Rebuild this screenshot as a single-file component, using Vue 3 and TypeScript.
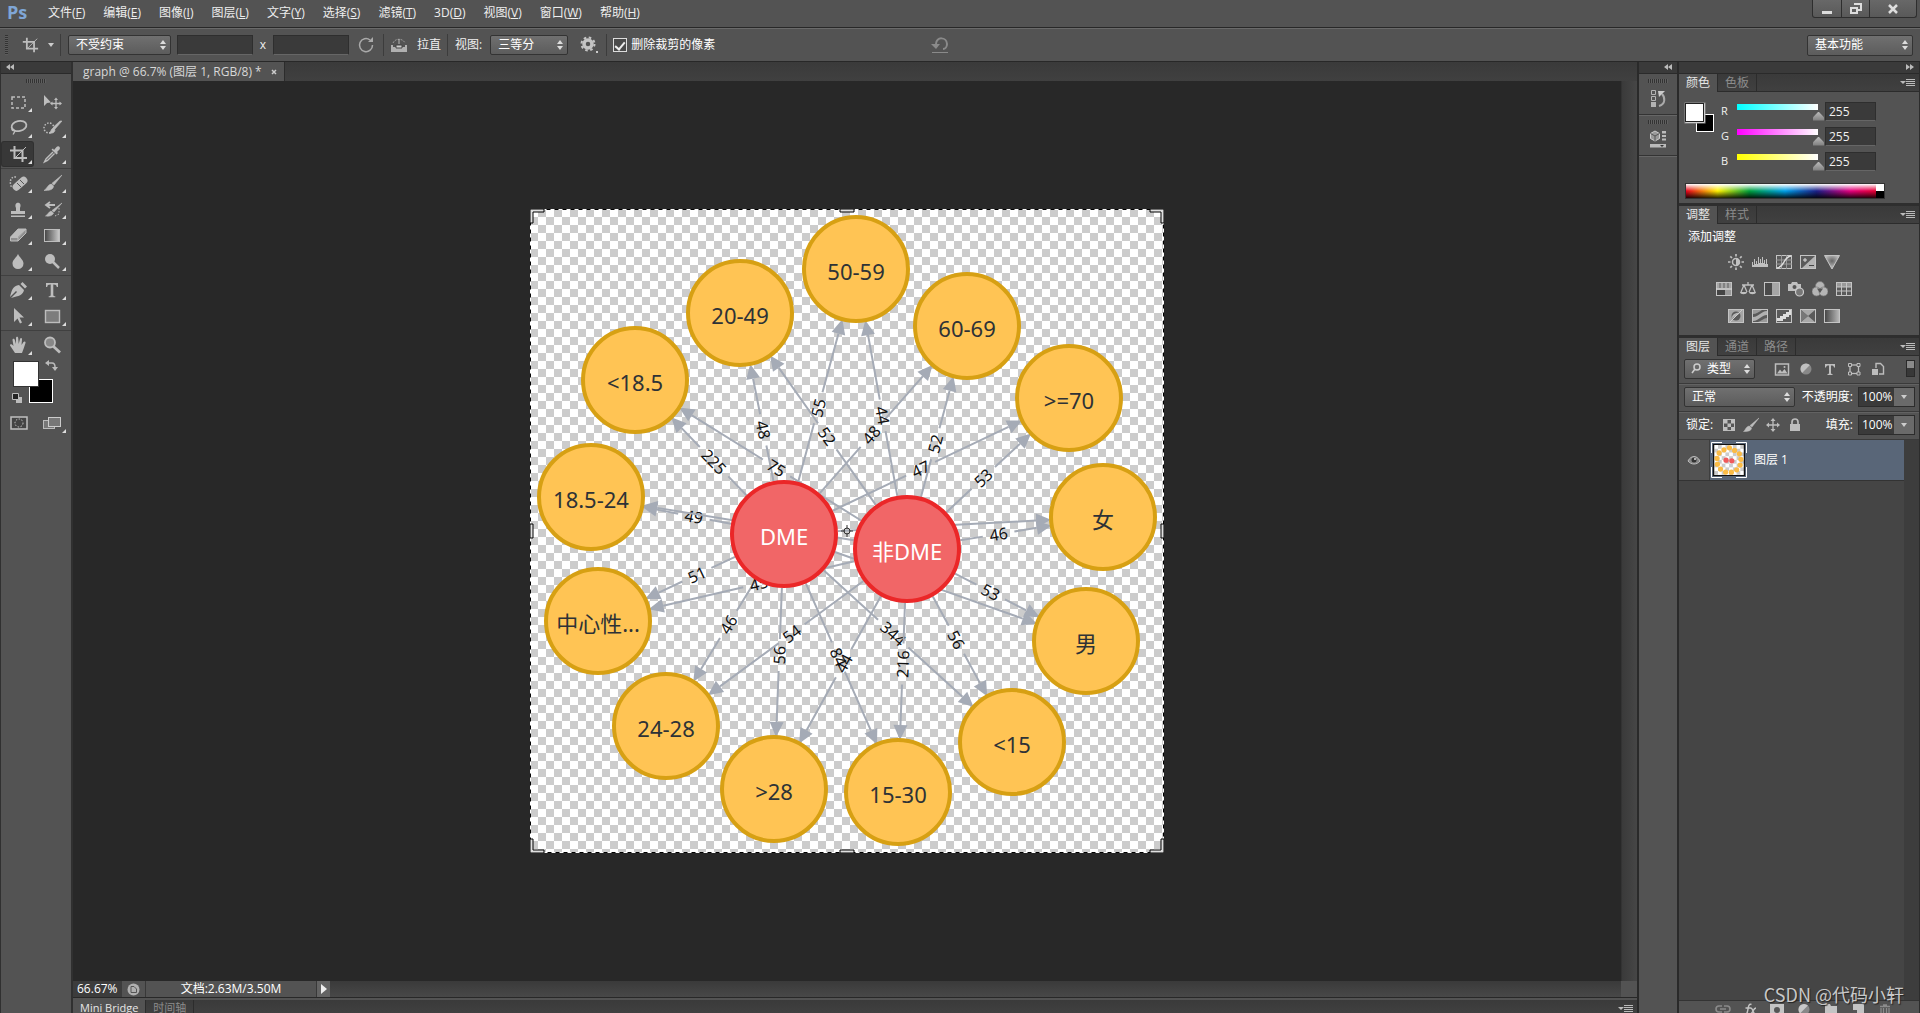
<script setup lang="ts">
interface GraphNode { id: string; x: number; y: number; core?: boolean }
interface Edge { from: string; to: string; label: string }

const menus = [
  ['文件', 'F'], ['编辑', 'E'], ['图像', 'I'], ['图层', 'L'], ['文字', 'Y'], ['选择', 'S'],
  ['滤镜', 'T'], ['3D', 'D'], ['视图', 'V'], ['窗口', 'W'], ['帮助', 'H'],
]

const nodes: GraphNode[] = [
  { id: '<18.5', x: 105, y: 171 },
  { id: '20-49', x: 210, y: 104 },
  { id: '50-59', x: 326, y: 60 },
  { id: '60-69', x: 437, y: 117 },
  { id: '>=70', x: 539, y: 189 },
  { id: '女', x: 573, y: 308 },
  { id: '男', x: 556, y: 432 },
  { id: '<15', x: 482, y: 533 },
  { id: '15-30', x: 368, y: 583 },
  { id: '>28', x: 244, y: 580 },
  { id: '24-28', x: 136, y: 517 },
  { id: '中心性...', x: 68, y: 412 },
  { id: '18.5-24', x: 61, y: 288 },
  { id: 'DME', x: 254, y: 325, core: true },
  { id: '非DME', x: 377, y: 340, core: true },
]

const edges: Edge[] = [
  { from: 'DME', to: '<18.5', label: '225' },
  { from: 'DME', to: '20-49', label: '48' },
  { from: 'DME', to: '50-59', label: '55' },
  { from: 'DME', to: '60-69', label: '48' },
  { from: 'DME', to: '>=70', label: '47' },
  { from: 'DME', to: '女', label: '' },
  { from: 'DME', to: '男', label: '' },
  { from: 'DME', to: '<15', label: '344' },
  { from: 'DME', to: '15-30', label: '84' },
  { from: 'DME', to: '>28', label: '56' },
  { from: 'DME', to: '24-28', label: '46' },
  { from: 'DME', to: '中心性...', label: '51' },
  { from: 'DME', to: '18.5-24', label: '49' },
  { from: '非DME', to: '<18.5', label: '75' },
  { from: '非DME', to: '20-49', label: '52' },
  { from: '非DME', to: '50-59', label: '44' },
  { from: '非DME', to: '60-69', label: '52' },
  { from: '非DME', to: '>=70', label: '53' },
  { from: '非DME', to: '女', label: '46' },
  { from: '非DME', to: '男', label: '53' },
  { from: '非DME', to: '<15', label: '56' },
  { from: '非DME', to: '15-30', label: '216' },
  { from: '非DME', to: '>28', label: '44' },
  { from: '非DME', to: '24-28', label: '54' },
  { from: '非DME', to: '中心性...', label: '45' },
  { from: '非DME', to: '18.5-24', label: '' },
]

const RIM = 54
const HEAD = 13

const drawn = edges.map((e) => {
  const a = nodes.find((n) => n.id === e.from)!
  const b = nodes.find((n) => n.id === e.to)!
  const dx = b.x - a.x
  const dy = b.y - a.y
  const len = Math.hypot(dx, dy)
  const angle = (Math.atan2(dy, dx) * 180) / Math.PI
  const end = len - RIM - HEAD
  const mid = (RIM + end) / 2
  const gap = e.label ? (e.label.length * 9 + 14) / 2 : 0
  return {
    ...e,
    place: `translate(${a.x} ${a.y}) rotate(${angle})`,
    shaft: `M${RIM} 0H${mid - gap}M${mid + gap} 0H${end}`,
    head: `M${end} -7L${len - RIM + 2} 0L${end} 7Z`,
    text: `translate(${mid} 0) rotate(${Math.abs(angle) > 90 ? 180 : 0})`,
  }
})

const S = 'fill="none" stroke="currentColor"'
const tools: Record<string, string> = {
  marquee: `<rect x="4" y="5" width="13" height="11" ${S} stroke-width="1.5" stroke-dasharray="3 2"/>`,
  move: `<path d="M2 3v11l3-3 4-.5z" fill="currentColor"/><path d="M14 7v9M9.500 11.500h9" ${S} stroke-width="1.300"/><path d="M14 5.500l2 2.500h-4zM14 17.500l2-2.500h-4zM8 11.500l2.500-2v4zM20 11.500l-2.500-2v4z" fill="currentColor"/>`,
  lasso: `<ellipse cx="11" cy="8" rx="7.500" ry="5" transform="rotate(-12 11 8)" ${S} stroke-width="1.800"/><path d="M5 10c-2 1-1 3 1 2.500s0 2.500-1 4" ${S} stroke-width="1.300"/>`,
  quick: `<circle cx="7" cy="10" r="5" ${S} stroke-width="1.500" stroke-dasharray="1.500 1.500"/><path d="M20 3l-7 8-2-1.500L18 3zM11 10l2 1.700c0 3-3 4-6 3.300 2-1 2-4 4-5z" fill="currentColor" stroke="currentColor" stroke-width=".6"/>`,
  crop: `<path d="M6.500 2v12H19M2 6.500h12.500V18" ${S} stroke-width="2"/><path d="M7 14L18 3" ${S}/>`,
  eyedrop: `<path d="M12 6l2.500-3c2-2 4.500.500 3 2.500L15 8l1 1-1.500 1.500-5-5L11 4.500z" fill="currentColor"/><path d="M11 8l-7 7-1.500 3 3-1.500 7-7" ${S} stroke-width="1.400"/>`,
  heal: `<path d="M8 4c-6-1-7 6-4 11" ${S} stroke-width="1.500" stroke-dasharray="1.500 1.500"/><rect x="3.500" y="7" width="17" height="7.500" rx="3.500" transform="rotate(-42 12 10.700)" fill="currentColor"/><path d="M9 10l4 4M12 7l4 4" stroke="#555" fill="none"/>`,
  brush: `<path d="M20 2l-8 10-2-1.700zM9.500 11l2 2c0 4-5 4.500-9.500 4.500 3-1.500 3.500-6 7.500-6.500z" fill="currentColor" stroke="currentColor" stroke-width=".6"/>`,
  stamp: `<path d="M8 9c-3-7 7-7 4 0v3h5v3H3v-3h5zM3 16.500h14V18H3z" fill="currentColor"/>`,
  history: `<path d="M20 4l-8 9-2-1.500zM9 12l2.500 2c-1 3-5 3.500-8 3 2-1 3-4 5.500-5z" fill="currentColor" stroke="currentColor" stroke-width=".6"/><path d="M4 6h9M8 3L4 6l4 3" ${S} stroke-width="1.800"/><path d="M17 9v6l-4 2" ${S} stroke-dasharray="1.500 1.500"/>`,
  eraser: `<path d="M10 4h8l-8 8H2z" fill="currentColor"/><path d="M2 12h8v4H2zM10 12l8-8v4l-8 8z" fill="#8f8f8f"/><path d="M2.500 12.500h7.500v3.500H2.500zM10 12.500L18 4v4l-8 8M10 4L2.500 12.500M10 4h8" ${S}/>`,
  gradient: `<defs><linearGradient id="tg"><stop stop-color="#444"/><stop offset="1" stop-color="#ccc"/></linearGradient></defs><rect x="2.500" y="4.500" width="15" height="12" fill="url(#tg)" stroke="currentColor"/>`,
  blur: `<path d="M10 3c2 4 5.500 6 5.500 9.500a5.500 5.500 0 0 1-11 0C4.500 9 8 7 10 3z" fill="currentColor"/>`,
  dodge: `<circle cx="8" cy="8" r="5" fill="currentColor"/><path d="M11 11l6 6" ${S} stroke-width="2.500"/>`,
  pen: `<path d="M12.500 4l2-2 4.500 4.500-2 2zM11 5l5 5c-1 5-5 6-13 8l6-6-1-1-6 6C4 9 5 6 11 5z" fill="currentColor"/>`,
  type: `<path d="M4 3h12v4h-1.200c-.4-2-1-2.600-3.500-2.600V15c0 1 .7 1.300 2 1.300v1H6.700v-1c1.300 0 2-.3 2-1.300V4.400C6 4.400 5.500 5 5.200 7H4z" fill="currentColor"/>`,
  arrow: `<path d="M6 2v14l3.500-3.500 2.500 5 2-1-2.500-5H16z" fill="currentColor"/>`,
  shape: `<rect x="3.500" y="4.500" width="14" height="12" fill="#7d7d7d" stroke="currentColor" stroke-width="1.400"/>`,
  hand: `<path d="M7 18L2 10.500c0-2 2-1.500 3.500.500L4.500 5c0-1.800 2-1.800 2.300 0L8 9V3c.2-1.600 2-1.600 2.200 0l.5 6 1.300-5c.5-1.500 2.200-1 2 .5L13.500 10l2-3c1-1.200 2.400-.4 2 1-1 3-2 6-3.500 10z" fill="currentColor"/>`,
  zoom: `<circle cx="8" cy="7.500" r="5" fill="#888" stroke="currentColor" stroke-width="1.800"/><path d="M11.500 11.500L18 17.500" ${S} stroke-width="2.800"/>`,
}
const toolGroups = [
  ['marquee', 'move', 'lasso', 'quick', 'crop', 'eyedrop'],
  ['heal', 'brush', 'stamp', 'history', 'eraser', 'gradient', 'blur', 'dodge'],
  ['pen', 'type', 'arrow', 'shape'],
  ['hand', 'zoom'],
]
const noFlyout = ['move', 'zoom']

const box = '<rect x="0.500" y="1.500" width="15" height="13" fill="#a6a6a6" stroke="#c4c4c4"/>'
const dark = '<rect x="0.500" y="1.500" width="15" height="13" fill="#5a5a5a" stroke="#c4c4c4"/>'
const adjustRows: string[][] = [
  [
    `<circle cx="8" cy="8" r="3.500" ${S} stroke-width="1.500"/><path d="M8 4.500a3.500 3.500 0 0 1 0 7z" fill="currentColor"/><path d="M8 0v2.500M8 13.500V16M0 8h2.500M13.500 8H16M2.300 2.300L4 4M12 12l1.700 1.700M2.300 13.700L4 12M12 4l1.700-1.700" ${S} stroke-width="1.700"/>`,
    `<path d="M0 13V8h1v3h1V5h1v5h1V7h1v3h1V3h1v6h1V5h1v4h1V3h1v6h1V6h1v4h1V5h1v5h1v3z" fill="currentColor"/>`,
    `${dark}<path d="M0 6h16M0 10h16M5.500 1v14M10.500 1v14" stroke="#999" fill="none"/><path d="M1 14C9 13 7 3 15 2" stroke="#ddd" stroke-width="1.500" fill="none"/>`,
    `${dark}<path d="M15 2v12H2z" fill="#b4b4b4"/><path d="M3 6h4M5 4v4" stroke="#ddd" fill="none"/><path d="M9 11.500h5" stroke="#444" fill="none"/>`,
    `<defs><radialGradient id="vg" cx=".5" cy=".4" r=".5"><stop stop-color="#666"/><stop offset="1" stop-color="#bbb"/></radialGradient></defs><path d="M.5 1.500h15L8 15z" fill="url(#vg)" stroke="#c4c4c4"/>`,
  ],
  [
    `${box}<path d="M1 9h14v5H1z" fill="#444"/><path d="M4 2v5M8 2v5M12 2v5" stroke="#777" stroke-width="1.500"/><path d="M0 8h16" stroke="#ddd"/><path d="M9 9h6v5H9z" fill="#999"/>`,
    `<path d="M8 1v3M2 4h12M4 4L1 11M4 4l3 7M12 4L9 11M12 4l3 7" ${S} stroke-width="1.300"/><path d="M0 11h7c0 3-7 3-7 0zM9 11h7c0 3-7 3-7 0z" fill="currentColor"/>`,
    `${box}<path d="M1 2h7v12H1z" fill="#4a4a4a"/>`,
    `<path d="M0 3h3l1-2h5l1 2h3v7H0z" fill="currentColor"/><circle cx="6.500" cy="6" r="2" fill="#555"/><circle cx="11.500" cy="11" r="4" fill="#777" stroke="#ccc" stroke-width="1.200"/>`,
    `<g fill="#b5b5b5" stroke="#777" stroke-width=".7"><circle cx="8" cy="5" r="4.500"/><circle cx="4.500" cy="10.500" r="4.500"/><circle cx="11.500" cy="10.500" r="4.500"/></g><path d="M5 7.500h6L8 12z" fill="#555"/>`,
    `${dark}<path d="M1 2h14v4H1z" fill="#999"/><path d="M0 6h16M0 10h16M5.500 2v13M10.500 2v13" stroke="#c4c4c4" fill="none"/>`,
  ],
  [
    `${box}<circle cx="8" cy="8" r="4.500" fill="#5a5a5a"/><path d="M4.500 12C5 8 9 9 12 4.500 9 5 5 5 4 9z" fill="#b4b4b4"/><path d="M2 14L14 2" stroke="#ccc" fill="none"/>`,
    `${dark}<path d="M1 9c6 0 8-6 14-6v4c-6 0-8 6-14 6z" fill="#b0b0b0"/><path d="M6 14c3-1 6-4 9-4v4zM1 2h9C7 4 4 6 1 6z" fill="#999"/>`,
    `${dark}<path d="M1 10h3V8h3V6h3V4h3V2h2v5h-2v2h-3v2H7v2H1z" fill="#ddd"/>`,
    `${dark}<path d="M1 2l7 6 7-6zM1 14l7-6 7 6z" fill="#a8a8a8"/><path d="M1 2l7 6-7 6" fill="#777"/>`,
    `<defs><linearGradient id="ag"><stop stop-color="#444"/><stop offset="1" stop-color="#bbb"/></linearGradient></defs><rect x="0.500" y="1.500" width="15" height="13" fill="url(#ag)" stroke="#c4c4c4"/>`,
  ],
]

const filterIcons = [
  `<rect x="1.500" y="3" width="13" height="11" ${S} stroke-width="1.500"/><path d="M3 12.500l3-4 2 2.500 2.500-3 3 4.500z" fill="currentColor"/><circle cx="10.500" cy="6" r="1" fill="currentColor"/>`,
  `<circle cx="8" cy="8" r="5.500" fill="#888"/><path d="M4.100 11.900A5.500 5.500 0 0 1 11.900 4.100z" fill="#c0c0c0"/>`,
  `<path d="M3 3h10v3.500h-1c-.3-1.600-.8-2-3-2V12c0 .8.500 1 1.500 1v1h-5v-1C6.500 13 7 12.800 7 12V4.500c-2.200 0-2.700.4-3 2H3z" fill="currentColor"/>`,
  `<rect x="4" y="4" width="8.500" height="8.500" ${S} stroke-width="1.300"/><path d="M2.500 2.500h3v3h-3zM11 2.500h3v3h-3zM2.500 11h3v3h-3zM11 11h3v3h-3z" fill="#555" stroke="currentColor"/>`,
  `<path d="M6 7V2.500h4.500l3 3V13H9" ${S} stroke-width="1.400"/><path d="M2 8h6v6H2z" fill="currentColor"/>`,
]
const lockIcons = [
  `<rect x="2.500" y="2.500" width="11" height="11" fill="#555" stroke="currentColor"/><path d="M3 3h3.500v3.500H3zM10 3h3.500v3.500H10zM6.500 6.500H10V10H6.500zM3 10h3.500v3.500H3zM10 10h3.500v3.500H10z" fill="currentColor"/>`,
  `<path d="M16 1L9 10 7 8.500zM6.500 9l2 2c0 3-4 3.500-8 3.500 2-1 2-5 6-5.500z" fill="currentColor" stroke="currentColor" stroke-width=".5"/>`,
  `<path d="M8 3v10M3 8h10" ${S} stroke-width="1.300"/><path d="M8 1l2.500 3h-5zM8 15l2.500-3h-5zM1 8l3-2.500v5zM15 8l-3-2.500v5z" fill="currentColor"/>`,
  `<path d="M3 7h10v7H3z" fill="currentColor"/><path d="M5 7.500V5c0-4 6-4 6 0v2.500" ${S} stroke-width="1.700"/>`,
]
const footIcons = [
  `<path d="M7 5H4a3 3 0 0 0 0 6h3M9 5h3a3 3 0 0 1 0 6H9M5 8h6" fill="none" stroke="#8b8b8b" stroke-width="1.600"/>`,
  `<path d="M9.500 3.500C7 2.500 6.500 5 6 8s-1 6-3.500 5.500M3.500 7h5M8.500 7c3 0 2 6 5 6M14 7c-3 0-3 6-6 6" ${S} stroke-width="1.500"/>`,
  `<path d="M1 3h14v11H1z" fill="currentColor"/><circle cx="8" cy="9" r="3" fill="#555"/>`,
  `<circle cx="8" cy="8.500" r="5.500" fill="#888"/><path d="M4.100 12.400A5.500 5.500 0 0 1 11.900 4.600z" fill="#c8c8c8"/>`,
  `<path d="M2 3h5l1 2h6v9H2z" fill="currentColor"/>`,
  `<path d="M3 3h11v11H7l-4-5z" fill="currentColor"/><path d="M3 9h4v5H3z" fill="#555"/>`,
  `<path d="M3 5.500h10M6 4h4M4 7v7h8V7M6.500 7v6M9.500 7v6" fill="none" stroke="#8b8b8b" stroke-width="1.300"/>`,
]

const channels = [
  { name: 'R', color: '#00ffff' },
  { name: 'G', color: '#ff00ff' },
  { name: 'B', color: '#ffff00' },
]
const corners = ['M0 0H14V3H3V14H0Z', 'M634 0H620V3H631V14H634Z', 'M0 644H14V641H3V630H0Z', 'M634 644H620V641H631V630H634Z',
  'M310 0H324V3H310Z', 'M310 641H324V644H310Z', 'M0 315H3V329H0Z', 'M631 315H634V329H631Z']
</script>

<template>
  <div class="app">
    <header class="menubar">
      <strong class="logo">Ps</strong>
      <nav class="menus">
        <a v-for="m in menus" :key="m[0]" href="#">{{ m[0] }}(<u>{{ m[1] }}</u>)</a>
      </nav>
      <div class="winbtns">
        <button aria-label="最小化"><svg width="12" height="12"><path d="M1 8h10v3H1z" fill="#ddd" /></svg></button>
        <button aria-label="还原"><svg width="14" height="12"><path d="M5 1h7v6H9M2 5h6v5H2z" fill="none" stroke="#ddd" stroke-width="2" /></svg></button>
        <button class="close" aria-label="关闭"><svg width="12" height="10"><path d="M2 1l8 8M10 1L2 9" stroke="#ddd" stroke-width="2.500" /></svg></button>
      </div>
    </header>

    <div class="options">
      <i class="vgrip"></i>
      <button class="plain cropbtn" aria-label="裁剪工具"><svg width="18" height="18" viewBox="0 0 20 20" v-html="tools.crop"></svg><i class="caret"></i></button>
      <i class="sep"></i>
      <span class="select ratio"><select aria-label="比例"><option>不受约束</option></select><i class="updown"></i></span>
      <input class="field size" type="text" aria-label="宽度">
      <span class="times">x</span>
      <input class="field size" type="text" aria-label="高度">
      <button class="plain rotate" aria-label="旋转"><svg width="18" height="18"><path d="M13 4A6.500 6.500 0 1 0 15.500 9" fill="none" stroke="#aaa" stroke-width="1.500" /><path d="M16 1v5h-5z" fill="#aaa" /></svg></button>
      <i class="sep"></i>
      <button class="plain level" aria-label="拉直"><svg width="18" height="16"><path d="M1 8h2v2h12V8h2v7H1z" fill="#b0b0b0" /><path d="M6 8h6v3H6z" fill="#ccc" stroke="#444" /><path d="M3 6c2-5 10-5 12 0" fill="none" stroke="#999" stroke-dasharray="2 1" /><path d="M9 2v5" stroke="#bbb" /></svg>拉直</button>
      <i class="sep"></i>
      <label class="view" for="overlay">视图:</label>
      <span class="select thirds"><select id="overlay"><option>三等分</option></select><i class="updown"></i></span>
      <button class="plain gear" aria-label="设置"><svg width="18" height="18"><circle cx="8" cy="8" r="4" fill="none" stroke="#c4c4c4" stroke-width="3.500" /><circle cx="8" cy="8" r="6.500" fill="none" stroke="#c4c4c4" stroke-width="2" stroke-dasharray="2.550 2.550" /><path d="M16 15h2v2h-2z" fill="#ccc" /></svg></button>
      <i class="sep"></i>
      <label class="check"><input type="checkbox" checked>删除裁剪的像素</label>
      <button class="plain undo" aria-label="复位"><svg width="18" height="18"><path d="M5 8c0-8 11-7 11 0 0 3-2 5-4 5" fill="none" stroke="#8a8a8a" stroke-width="2" /><path d="M0 8h9l-4 5z" fill="#8a8a8a" /><path d="M1 16.500h16" stroke="#8a8a8a" /></svg></button>
      <span class="select work"><select aria-label="工作区"><option>基本功能</option></select><i class="updown"></i></span>
    </div>

    <div class="main">
      <aside class="tools">
        <div class="strip"><svg width="8" height="6"><path d="M4 0v6L0 3zM8 0v6L4 3z" fill="#bbb" /></svg></div>
        <i class="hgrip"></i>
        <div v-for="(g, i) in toolGroups" :key="i" class="group">
          <button v-for="t in g" :key="t" class="tool" :class="{ on: t === 'crop', fly: !noFlyout.includes(t) }" :aria-label="t">
            <svg width="20" height="20" viewBox="0 0 20 20" v-html="tools[t]"></svg>
          </button>
        </div>
        <svg class="swatches" width="50" height="48">
          <rect x="19.500" y="20.500" width="23" height="23" fill="#000" stroke="#fff" />
          <rect x="3.500" y="2.500" width="25" height="25" fill="#fff" stroke="#333" />
          <path d="M38 4h4c2 0 3 1 3 4v1" fill="none" stroke="#bbb" stroke-width="1.500" />
          <path d="M35 4l4-3v6zM42 8h6l-3 4z" fill="#bbb" />
          <path d="M6 38h6v6H6z" fill="#bbb" /><path d="M2.500 34.500h6v6h-6z" fill="#222" stroke="#bbb" />
        </svg>
        <div class="modes">
          <button class="tool" aria-label="快速蒙版"><svg width="20" height="20"><rect x="2" y="4" width="16" height="12" fill="#444" stroke="#c0c0c0" stroke-width="1.500" /><circle cx="10" cy="10" r="4" fill="none" stroke="#ccc" stroke-dasharray="1.500 1.500" /></svg></button>
          <button class="tool fly" aria-label="屏幕模式"><svg width="20" height="20"><rect x="1.500" y="7.500" width="11" height="8" fill="#777" stroke="#bbb" /><rect x="6.500" y="4.500" width="12" height="9" fill="#777" stroke="#ccc" /></svg></button>
        </div>
      </aside>

      <section class="doc">
        <div class="tabs">
          <div class="tab doctab"><span>graph @ 66.7% (图层 1, RGB/8) *</span><button class="plain" aria-label="关闭文档"><svg width="6" height="6"><path d="M1 1l4 4M5 1L1 5" stroke="#ccc" stroke-width="1.500" /></svg></button></div>
        </div>
        <div class="work-area">
          <div class="canvas">
            <svg class="graph" width="634" height="644" viewBox="0 0 634 644">
              <defs><pattern id="checker" width="16" height="16" patternUnits="userSpaceOnUse"><rect width="16" height="16" fill="#fff" /><path d="M8 0h8v8H8zM0 8h8v8H0z" fill="#ccc" /></pattern></defs>
              <rect width="634" height="644" fill="url(#checker)" />
              <g v-for="(e, i) in drawn" :key="i" :transform="e.place">
                <path :d="e.shaft" class="shaft" />
                <path :d="e.head" class="head" />
                <text class="elabel" :transform="e.text" y="6">{{ e.label }}</text>
              </g>
              <g v-for="n in nodes" :key="n.id" :class="{ core: n.core }" class="node" :transform="`translate(${n.x} ${n.y})`">
                <circle r="52" />
                <text y="11">{{ n.id }}</text>
              </g>
              <rect x="0.500" y="0.500" width="633" height="643" class="edge-w" />
              <rect x="0.500" y="0.500" width="633" height="643" class="edge-b" />
              <path v-for="c in corners" :key="c" :d="c" class="handle" />
              <circle cx="317" cy="322" r="3" fill="none" stroke="#333" />
              <path d="M317 316v4M317 324v4M311 322h4M319 322h4" stroke="#333" />
            </svg>
          </div>
          <div class="vscroll"></div>
        </div>
        <div class="status">
          <input class="zoomval" type="text" value="66.67%" aria-label="缩放">
          <span class="badge"><svg width="13" height="13"><circle cx="6.500" cy="6.500" r="6" fill="#b0b0b0" /><path d="M4 3.500h3l2.500 2.500v3.500H4z" fill="none" stroke="#555" /></svg></span>
          <span class="info">文档:2.63M/3.50M</span>
          <button class="more" aria-label="更多"><svg width="6" height="10"><path d="M0 0l6 5-6 5z" fill="#eee" /></svg></button>
          <div class="hscroll"></div>
          <div class="corner"></div>
        </div>
        <div class="tabs bottom">
          <button class="tab active">Mini Bridge</button><button class="tab">时间轴</button><i class="pmenu"></i>
        </div>
      </section>

      <aside class="dock">
        <div class="strip right"><svg width="8" height="6"><path d="M4 0v6L0 3zM8 0v6L4 3z" fill="#bbb" /></svg></div>
        <div class="dockcell"><i class="hgrip"></i><button class="plain" aria-label="历史记录"><svg width="16" height="18"><path d="M1.500 1.500h4v4h-4zM1.500 7.500h4v4h-4z" fill="none" stroke="#b4b4b4" /><path d="M1 13h5v5H1z" fill="#b4b4b4" /><path d="M9 17c7-2 6-9 3-12" fill="none" stroke="#aaa" stroke-width="2" /><path d="M8 2h7l-6 6z" fill="#ccc" /></svg></button></div>
        <div class="dockcell"><i class="hgrip"></i><button class="plain" aria-label="属性"><svg width="16" height="18"><path d="M5 1l4.500 2.500v5L5 11 .5 8.500v-5z" fill="#999" stroke="#ccc" /><path d="M.5 3.500L5 6l4.500-2.500M5 6v5" fill="none" stroke="#555" /><path d="M12 1h4v2.500h-4zM12 5h4v2h-4zM12 8.500h4v2h-4zM0 14h16v3.500H0z" fill="#bbb" /><path d="M10 15h4l-2 2z" fill="#333" /></svg></button></div>
      </aside>

      <aside class="panels">
        <div class="strip right"><svg width="8" height="6"><path d="M0 0v6l4-3zM4 0v6l4-3z" fill="#bbb" /></svg></div>

        <section class="panel">
          <div class="tabs"><button class="tab active">颜色</button><button class="tab">色板</button><i class="pmenu"></i></div>
          <div class="color">
            <svg class="fgbg" width="32" height="32"><rect x="12.500" y="12.500" width="17" height="17" fill="#000" stroke="#fff" /><rect x="1" y="1" width="20" height="20" fill="#fff" stroke="#999" /><rect x="1.500" y="1.500" width="18" height="18" fill="#fff" stroke="#222" /></svg>
            <div class="sliders">
              <div v-for="c in channels" :key="c.name" class="chan">
                <label :for="'c' + c.name">{{ c.name }}</label>
                <input :id="'c' + c.name" class="range" type="range" min="0" max="255" value="255" :style="{ '--c': c.color }">
                <input class="field num" type="text" value="255" :aria-label="c.name + ' 值'">
              </div>
            </div>
            <div class="spectrum"><i></i></div>
          </div>
        </section>

        <section class="panel">
          <div class="tabs"><button class="tab active">调整</button><button class="tab">样式</button><i class="pmenu"></i></div>
          <div class="adjust">
            <p>添加调整</p>
            <div v-for="(r, i) in adjustRows" :key="i" class="arow">
              <button v-for="(a, j) in r" :key="j" class="plain" :aria-label="'调整 ' + (i + 1) + '-' + (j + 1)"><svg width="16" height="16" viewBox="0 0 16 16" v-html="a"></svg></button>
            </div>
          </div>
        </section>

        <section class="panel layers">
          <div class="tabs"><button class="tab active">图层</button><button class="tab">通道</button><button class="tab">路径</button><i class="pmenu"></i></div>
          <div class="lrow filter">
            <span class="select kind"><svg width="10" height="11"><circle cx="6" cy="4" r="3" fill="none" stroke="#ccc" stroke-width="1.500" /><path d="M4 6L1 10" stroke="#ccc" stroke-width="1.500" /></svg><select aria-label="滤镜类型"><option>类型</option></select><i class="updown"></i></span>
            <div class="ficons"><button v-for="(f, i) in filterIcons" :key="i" class="plain" :aria-label="'过滤 ' + (i + 1)"><svg width="16" height="16" viewBox="0 0 16 16" v-html="f"></svg></button></div>
            <i class="toggle"></i>
          </div>
          <div class="lrow">
            <span class="select blend"><select aria-label="混合模式"><option>正常</option></select><i class="updown"></i></span>
            <label class="push" for="opacity">不透明度:</label>
            <span class="combo"><input id="opacity" type="text" value="100%"><button aria-label="不透明度滑块"><i class="caret"></i></button></span>
          </div>
          <div class="lrow">
            <span class="lock">锁定:</span>
            <div class="licons"><button v-for="(f, i) in lockIcons" :key="i" class="plain" :aria-label="'锁定 ' + (i + 1)"><svg width="16" height="16" viewBox="0 0 16 16" v-html="f"></svg></button></div>
            <label class="push" for="fill">填充:</label>
            <span class="combo"><input id="fill" type="text" value="100%"><button aria-label="填充滑块"><i class="caret"></i></button></span>
          </div>
          <div class="list">
            <div class="items">
              <div class="layer">
                <button class="eye plain" aria-label="可见性"><svg width="14" height="10"><path d="M1 6c3-6 9-6 12 0-3 4-9 4-12 0z" fill="#888" stroke="#bbb" /><circle cx="7" cy="5" r="2.500" fill="#333" /><circle cx="8" cy="4" r="1" fill="#ddd" /></svg></button>
                <div class="name">
                  <svg width="36" height="36" viewBox="0 0 36 36">
                    <path d="M.5 11V.5H11M25 .5h10.500V11M35.500 25v10.500H25M11 35.500H.500V25" fill="none" stroke="#fff" />
                    <rect x="2" y="2" width="32" height="32" fill="#111" />
                    <svg x="3" y="3" width="30" height="30" viewBox="0 0 634 644">
                      <defs><pattern id="mini" width="160" height="160" patternUnits="userSpaceOnUse"><rect width="160" height="160" fill="#fff" /><path d="M80 0h80v80H80zM0 80h80v80H0z" fill="#ccc" /></pattern></defs>
                      <rect width="634" height="644" fill="url(#mini)" />
                      <circle v-for="n in nodes" :key="n.id" :cx="n.x" :cy="n.y" r="56" :fill="n.core ? '#f05a5c' : '#fabb46'" />
                    </svg>
                  </svg>
                  <span>图层 1</span>
                </div>
              </div>
            </div>
            <div class="lscroll"></div>
          </div>
          <div class="foot"><button v-for="(f, i) in footIcons" :key="i" class="plain" :aria-label="'图层操作 ' + (i + 1)"><svg width="16" height="16" viewBox="0 0 16 16" v-html="f"></svg></button></div>
        </section>
      </aside>
    </div>
    <div class="watermark">CSDN @代码小轩</div>
  </div>
</template>

<style>
html, body { margin: 0; background: #535353; }
</style>

<style scoped>
* { box-sizing: border-box; }
.app { position: relative; height: 100vh; display: flex; flex-direction: column; overflow: hidden; background: #535353; color: #f0f0f0; font: 12px/16px "Open Sans", "Noto Sans CJK SC", sans-serif; }
button, input, select { font: inherit; color: inherit; margin: 0; padding: 0; border: 0; border-radius: 0; }
button { background: none; display: flex; align-items: center; justify-content: center; }
svg { display: block; flex: none; }
i { display: block; flex: none; }
.plain { color: #bdbdbd; }

.menubar { flex: none; height: 28px; display: flex; border-bottom: 1px solid #282828; padding-left: 7px; }
.logo { width: 41px; color: #7fa6d6; font: 700 18px/25px "Open Sans", sans-serif; }
.menus { display: flex; gap: 18px; flex: 1; }
.menus a { color: #eee; text-decoration: none; line-height: 25px; white-space: nowrap; }
.winbtns { display: flex; height: 18px; margin-right: 3px; border: 1px solid #2e2e2e; border-top: 0; border-radius: 0 0 3px 3px; background: linear-gradient(#686868, #595959); }
.winbtns button { width: 28px; }
.winbtns button + button { border-left: 1px solid #2e2e2e; }
.winbtns .close { width: 47px; }

.options { flex: none; height: 34px; display: flex; align-items: center; border-top: 1px solid #6a6a6a; border-bottom: 1px solid #282828; padding: 0 7px 0 5px; }
.vgrip { width: 3px; height: 20px; background: repeating-linear-gradient(#333 0 1px, #5c5c5c 1px 2px); }
.cropbtn { gap: 9px; margin: 0 6px 0 13px; }
.caret { border: 3px solid transparent; border-top: 4px solid #ccc; border-bottom: 0; }
.sep { width: 1px; height: 22px; background: #3c3c3c; }
.select { position: relative; display: flex; align-items: center; height: 20px; border: 1px solid #333; border-radius: 2px; background: linear-gradient(#707070, #5c5c5c); color: #fff; }
.select select { appearance: none; background: none; flex: 1; min-width: 0; height: 18px; padding-left: 7px; line-height: 16px; }
.updown { position: absolute; right: 4px; top: 4px; width: 6px; height: 10px; }
.updown::before, .updown::after { content: ""; position: absolute; left: 0; border: 3px solid transparent; }
.updown::before { top: 0; border-bottom: 4px solid #ddd; border-top: 0; }
.updown::after { bottom: 0; border-top: 4px solid #ddd; border-bottom: 0; }
.ratio { width: 103px; margin: 0 6px 0 7px; }
.field { height: 20px; background: #3a3a3a; border: 1px solid #2e2e2e; border-bottom-color: #666; }
.size { width: 76px; }
.times { width: 20px; text-align: center; }
.rotate { margin: 0 8px; }
.level { gap: 9px; margin: 0 6px; color: #f0f0f0; }
.view { margin: 0 8px 0 7px; }
.thirds { width: 78px; margin-right: 12px; }
.gear { margin-right: 8px; }
.check { display: flex; align-items: center; gap: 4px; margin-left: 6px; color: #fff; }
.check input { appearance: none; width: 14px; height: 14px; border: 1px solid #ddd; background: #4a4a4a; display: grid; place-items: center; }
.check input::before { content: ""; width: 4px; height: 8px; border: solid #eee; border-width: 0 2px 2px 0; transform: rotate(40deg); }
.undo { margin-left: 216px; }
.work { width: 106px; height: 21px; margin-left: auto; }

.main { flex: 1; min-height: 0; display: flex; }
.strip { flex: none; height: 12px; background: #3a3a3a; border-bottom: 1px solid #2a2a2a; padding: 2px 5px; display: flex; }
.strip.right { justify-content: flex-end; }
.hgrip { width: 20px; height: 4px; margin: 5px auto 0; background: repeating-linear-gradient(90deg, #333 0 1px, #606060 1px 2px); }

.tools { flex: none; width: 73px; border: solid #303030; border-width: 0 2px 0 1px; display: flex; flex-direction: column; }
.group { display: grid; grid-template-columns: 34px 34px; grid-auto-rows: 26px; padding: 1px 0; }
.group + .group { border-top: 1px solid #404040; }
.hgrip + .group { margin-top: 5px; }
.tool { position: relative; width: 31px; height: 24px; margin: 1px; color: #bdbdbd; }
.tool.on { background: #383838; box-shadow: 0 0 0 1px #303030; border-radius: 2px; }
.tool.fly::after { content: ""; position: absolute; right: 1px; bottom: 2px; width: 4px; height: 4px; background: #ddd; clip-path: polygon(100% 0, 100% 100%, 0 100%); }
.swatches { margin-left: 9px; }
.modes { display: flex; margin: 3px 0 0 1px; }

.doc { flex: 1; min-width: 0; display: flex; flex-direction: column; }
.tabs { flex: none; height: 18px; display: flex; background: linear-gradient(#3a3a3a, #404040); border-bottom: 1px solid #2c2c2c; }
.tab { padding: 0 7px; color: #8c8c8c; border-right: 1px solid #2c2c2c; white-space: nowrap; line-height: 16px; }
.tab.active { background: #535353; color: #e6e6e6; margin-bottom: -1px; padding-bottom: 1px; }
.doc > .tabs { height: 19px; border-bottom: 0; }
.doc .doctab { display: flex; align-items: center; gap: 9px; padding: 1px 7px 0 10px; background: #535353; color: #d8d8d8; }
.work-area { flex: 1; min-height: 0; display: flex; }
.canvas { flex: 1; min-width: 0; background: #282828; display: flex; align-items: center; justify-content: center; overflow: hidden; }
.vscroll { width: 16px; background: linear-gradient(90deg, #3a3a3a, #464646); border-left: 1px solid #333; }
.status { flex: none; height: 17px; display: flex; border-bottom: 1px solid #282828; }
.zoomval { width: 49px; background: #3c3c3c; padding-left: 4px; color: #fff; }
.badge { width: 24px; display: grid; place-items: center; border-right: 1px solid #383838; }
.info { width: 171px; text-align: center; color: #fff; border-right: 1px solid #383838; }
.more { width: 13px; background: #636363; }
.hscroll { flex: 1; background: linear-gradient(#3a3a3a, #484848); }
.corner { width: 16px; }
.doc > .bottom { height: 13px; margin-top: 2px; overflow: hidden; align-items: flex-start; }
.bottom .tab { height: 16px; font-size: 11px; }
.pmenu { width: 15px; height: 8px; margin: 5px 4px 0 auto; background: linear-gradient(#bbb, #bbb) 6px 0 / 9px 1px no-repeat, linear-gradient(#bbb, #bbb) 6px 2px / 9px 1px no-repeat, linear-gradient(#bbb, #bbb) 6px 4px / 9px 1px no-repeat, linear-gradient(#bbb, #bbb) 6px 6px / 9px 1px no-repeat; }
.pmenu::before { content: ""; display: block; width: 0; margin-top: 2px; border: solid transparent; border-width: 3px 3px 0; border-top-color: #bbb; }

.shaft { stroke: #a5abb6; stroke-width: 2; fill: none; }
.head { fill: #a5abb6; }
.graph text { text-anchor: middle; font-family: "Noto Sans", "Noto Sans CJK SC", sans-serif; }
.elabel { font-size: 16px; fill: #111; }
.node circle { fill: #ffc454; stroke: #d7a013; stroke-width: 4; }
.node text { font-size: 22px; fill: #2e3236; }
.core circle { fill: #f16667; stroke: #eb2728; }
.core text { fill: #fff; }
.edge-w { fill: none; stroke: #fff; }
.edge-b { fill: none; stroke: #000; stroke-dasharray: 4 4; }
.handle { fill: #e0e0e0; stroke: #000; }

.dock { flex: none; width: 42px; border: solid #2a2a2a; border-width: 0 2px; }
.dockcell { height: 41px; display: flex; flex-direction: column; border-bottom: 1px solid #333; box-shadow: 0 1px #666; }
.dockcell .plain { margin: 6px auto 0; }

.panels { flex: none; width: 241px; display: flex; flex-direction: column; border-right: 1px solid #2c2c2c; }
.panel + .panel { border-top: 3px solid #2e2e2e; }
.color { display: grid; grid-template: 78px 16px / 43px 1fr; row-gap: 3px; height: 111px; padding: 10px 0 0 5px; }
.chan { display: flex; height: 25px; }
.chan label { flex: none; width: 16px; margin: 1px 0 0 -6px; font-size: 11px; }
.range { appearance: none; flex: none; width: 87px; height: 19px; margin-right: 1px; background: linear-gradient(90deg, var(--c), #fff) 0 2px / 81px 6px no-repeat; }
.range::-webkit-slider-thumb { appearance: none; width: 11px; height: 9px; margin-top: 9px; background: linear-gradient(#bbb, #7d7d7d); clip-path: polygon(50% 0, 100% 65%, 100% 100%, 0 100%, 0 65%); }
.num { width: 51px; flex: none; height: 19px; padding-left: 3px; }
.spectrum { grid-column: 1 / 3; width: 200px; margin-left: 1px; border: 1px solid #333; display: flex; background: linear-gradient(rgba(255,255,255,1), rgba(255,255,255,0) 50%, rgba(0,0,0,0) 50%, rgba(0,0,0,.85)), linear-gradient(90deg, #e8001c, #fff200 16%, #00a03c 32%, #00a0e8 50%, #1c2088 66%, #e4007f 83%, #e8001c); }
.spectrum i { margin-left: auto; width: 8px; background: linear-gradient(#fff 50%, #000 50%); }
.adjust { height: 111px; padding: 5px 0 0 9px; }
.adjust p { margin: 0 0 3px; color: #fff; }
.arow { display: flex; gap: 8px; height: 27px; width: 192px; justify-content: center; align-items: center; }
.arow .plain { color: #c0c0c0; }

.layers { flex: 1; min-height: 0; display: flex; flex-direction: column; }
.lrow { flex: none; height: 28px; display: flex; align-items: center; padding: 0 4px 2px 5px; border-bottom: 1px solid #3a3a3a; box-shadow: 0 1px #626262; color: #fff; }
.kind { width: 71px; padding-left: 6px; }
.kind select { padding-left: 6px; }
.ficons { display: flex; gap: 8px; margin-left: 19px; }
.toggle { width: 9px; height: 17px; margin-left: auto; border: 1px solid #2a2a2a; background: linear-gradient(#8a8a8a 50%, #383838 50%); }
.blend { width: 111px; }
.push { margin-left: auto; margin-right: 5px; }
.combo { display: flex; height: 20px; border: 1px solid #2c2c2c; }
.combo input { width: 35px; background: #3a3a3a; padding-left: 3px; }
.combo button { width: 20px; background: #6a6a6a; }
.lock { margin-left: 2px; }
.licons { display: flex; gap: 6px; margin-left: 8px; }
.list { flex: 1; min-height: 0; display: flex; background: #454545; }
.items { flex: 1; }
.layer { display: flex; height: 41px; background: #535353; border-bottom: 1px solid #333; }
.eye { width: 31px; border-right: 1px solid #3e3e3e; }
.name { flex: 1; display: flex; align-items: center; gap: 7px; padding-left: 1px; background: #596678; color: #fff; }
.lscroll { width: 15px; background: #3d3d3d; }
.foot { flex: none; height: 13px; display: flex; justify-content: center; align-items: flex-start; gap: 11px; padding-left: 10px; border-top: 1px solid #333; overflow: hidden; }
.foot .plain { color: #c4c4c4; }
.watermark { position: absolute; right: 16px; bottom: 6px; font: 18px/26px "Noto Sans CJK SC", sans-serif; color: #c8c8c8; text-shadow: 1px 1px 1px #222; }
</style>
